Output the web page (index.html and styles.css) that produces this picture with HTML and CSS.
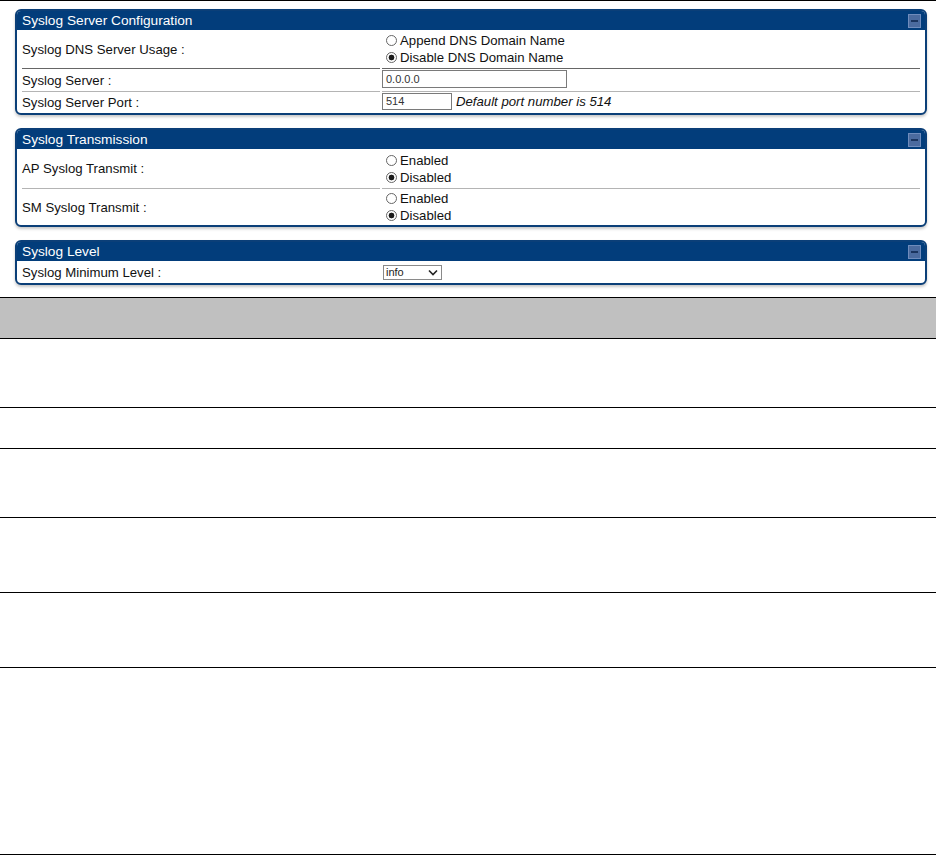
FILE: index.html
```html
<!DOCTYPE html>
<html>
<head>
<meta charset="utf-8">
<title>Syslog</title>
<link rel="stylesheet" href="styles.css">
</head>
<body>
<div class="topline"></div>
<div class="panels">
  <section class="panel p1">
    <div class="panel-head"><span class="title">Syslog Server Configuration</span><span class="min"></span></div>
    <div class="panel-body">
      <div class="row r-tall sep-dark">
        <div class="label">Syslog DNS Server Usage :</div>
        <div class="value">
          <div class="radios">
            <div class="opt"><span class="radio"></span>Append DNS Domain Name</div>
            <div class="opt"><span class="radio on"></span>Disable DNS Domain Name</div>
          </div>
        </div>
      </div>
      <div class="row r-input sep-light">
        <div class="label">Syslog Server :</div>
        <div class="value"><div class="input wide">0.0.0.0</div></div>
      </div>
      <div class="row r-port">
        <div class="label">Syslog Server Port :</div>
        <div class="value"><div class="input port">514</div><span class="hint">Default port number is 514</span></div>
      </div>
    </div>
  </section>

  <section class="panel p2">
    <div class="panel-head"><span class="title">Syslog Transmission</span><span class="min"></span></div>
    <div class="panel-body">
      <div class="row r-radio1 sep-light">
        <div class="label">AP Syslog Transmit :</div>
        <div class="value">
          <div class="radios">
            <div class="opt"><span class="radio"></span>Enabled</div>
            <div class="opt"><span class="radio on"></span>Disabled</div>
          </div>
        </div>
      </div>
      <div class="row r-radio2">
        <div class="label">SM Syslog Transmit :</div>
        <div class="value">
          <div class="radios">
            <div class="opt"><span class="radio"></span>Enabled</div>
            <div class="opt"><span class="radio on"></span>Disabled</div>
          </div>
        </div>
      </div>
    </div>
  </section>

  <section class="panel p3">
    <div class="panel-head"><span class="title">Syslog Level</span><span class="min"></span></div>
    <div class="panel-body">
      <div class="row r-level">
        <div class="label">Syslog Minimum Level :</div>
        <div class="value">
          <div class="select"><span>info</span>
            <svg class="chev" width="10" height="7" viewBox="0 0 10 7"><path d="M1 1.5 L5 5.5 L9 1.5" fill="none" stroke="#222" stroke-width="1.6"/></svg>
          </div>
        </div>
      </div>
    </div>
  </section>
</div>

<div class="doc-table">
  <div class="t-head"></div>
  <div class="t-row h69"></div>
  <div class="t-row h41"></div>
  <div class="t-row h69"></div>
  <div class="t-row h75"></div>
  <div class="t-row h75"></div>
  <div class="t-row h187"></div>
</div>
</body>
</html>
```

FILE: styles.css
```css
* { box-sizing: border-box; }
html, body { margin: 0; padding: 0; background: #fff; }
body {
  width: 936px;
  font-family: "Liberation Sans", Arial, sans-serif;
  color: #111;
}
.topline { height: 1px; background: #000; }

.panels {
  padding: 8px 9px 0 15px;
  display: flex;
  flex-direction: column;
  gap: 13px;
}
.panel {
  border: 2px solid #0b3f78;
  border-radius: 6px;
  overflow: hidden;
  background: #fff;
  box-shadow: 0 2px 3px rgba(0, 0, 0, 0.22);
}
.panel-head {
  height: 19px;
  background: #023d7b;
  color: #fff;
  font-size: 13.7px;
  line-height: 19px;
  padding: 0 4px 0 5px;
  display: flex;
  align-items: center;
  justify-content: space-between;
}
.min {
  width: 13px;
  height: 14px;
  background: #4b6b9f;
  border: 1px solid #6f8cbc;
  display: flex;
  align-items: center;
  justify-content: center;
}
.min::before {
  content: "";
  width: 7px;
  height: 2px;
  background: #1b355f;
}
.panel-body { padding: 0 5px; }

.row {
  display: grid;
  grid-template-columns: 358px 1fr;
  column-gap: 2px;
  font-size: 13.2px;
}
.row > .label, .row > .value {
  display: flex;
  align-items: center;
}
.sep-dark > .label, .sep-dark > .value { border-bottom: 1px solid #666; }
.sep-light > .label, .sep-light > .value { border-bottom: 1px solid #b4b4b4; }

.r-tall { height: 39px; }
.r-input { height: 23px; }
.r-port { height: 21px; }
.r-radio1 { height: 40px; }
.r-radio2 { height: 36px; }
.r-level { height: 22px; }

.r-input > .value { align-items: flex-start; padding-top: 1px; }
.r-port > .value { align-items: flex-start; padding-top: 1px; }

.radios { padding-left: 4px; }
.opt {
  display: flex;
  align-items: center;
  line-height: 17px;
  height: 17px;
}
.radio {
  width: 11px;
  height: 11px;
  border: 1px solid #666;
  border-radius: 50%;
  margin-right: 3px;
  background: #fff;
}
.radio.on {
  background: radial-gradient(circle, #1a1a1a 0 2.6px, #fff 3.2px);
}

.input {
  border: 1px solid #7a7a7a;
  height: 18px;
  font-size: 11px;
  line-height: 16px;
  padding-left: 3px;
  color: #333;
}
.input.wide { width: 185px; }
.input.port { width: 70px; height: 17px; line-height: 15px; }
.hint {
  font-style: italic;
  margin-left: 4px;
  line-height: 17px;
}

.select {
  margin-left: 1px;
  width: 59px;
  height: 15px;
  border: 1px solid #8a8a8a;
  font-size: 11px;
  line-height: 13px;
  padding: 0 3px 0 2px;
  display: flex;
  align-items: center;
  justify-content: space-between;
  color: #222;
}
.chev { display: block; }

.doc-table { margin-top: 12px; }
.t-head {
  height: 42px;
  background: #c0c0c0;
  border-top: 1px solid #000;
  border-bottom: 1px solid #000;
}
.t-row { border-bottom: 1px solid #000; }
.h69 { height: 69px; }
.h41 { height: 41px; }
.h75 { height: 75px; }
.h187 { height: 187px; }
```
